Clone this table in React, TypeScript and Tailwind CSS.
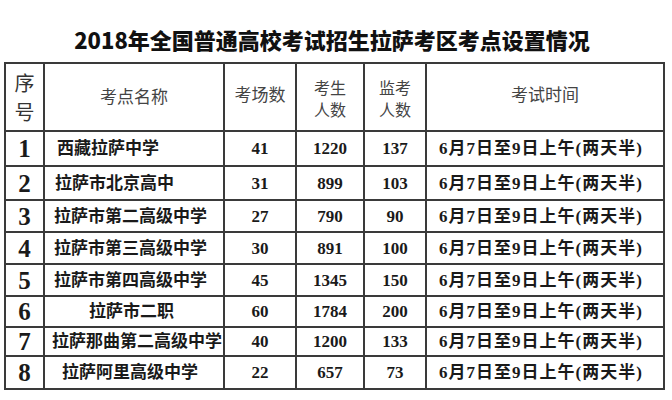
type Row = { no: number; name: string; pad: number; rooms: number; students: number; proctors: number; h: number };

const ROWS: Row[] = [
  { no: 1, name: "西藏拉萨中学", pad: 12, rooms: 41, students: 1220, proctors: 137, h: 35 },
  { no: 2, name: "拉萨市北京高中", pad: 10, rooms: 31, students: 899, proctors: 103, h: 34 },
  { no: 3, name: "拉萨市第二高级中学", pad: 9, rooms: 27, students: 790, proctors: 90, h: 32 },
  { no: 4, name: "拉萨市第三高级中学", pad: 9, rooms: 30, students: 891, proctors: 100, h: 32 },
  { no: 5, name: "拉萨市第四高级中学", pad: 9, rooms: 45, students: 1345, proctors: 150, h: 32 },
  { no: 6, name: "拉萨市二职", pad: 44, rooms: 60, students: 1784, proctors: 200, h: 31 },
  { no: 7, name: "拉萨那曲第二高级中学", pad: 7, rooms: 40, students: 1200, proctors: 133, h: 29 },
  { no: 8, name: "拉萨阿里高级中学", pad: 17, rooms: 22, students: 657, proctors: 73, h: 33 },
];

const serif = "font-['Liberation_Serif','Noto_Sans_CJK_SC',serif]";
const sans = "font-['Noto_Sans_CJK_SC','Noto_Sans',sans-serif]";
const cell = "border-2 border-[#3a3a3a] p-0";

export default function App() {
  return (
    <div className="w-[672px] h-[400px] bg-white overflow-hidden">
      <h1 className={`${sans} pt-[24px] h-[62px] text-center text-[22px] leading-[30px] font-black text-[#111] pr-[8px]`}>
        2018年全国普通高校考试招生拉萨考区考点设置情况
      </h1>

      <table className="ml-[4px] w-[659px] table-fixed border-collapse border-2 border-[#111]">
        <colgroup>
          <col className="w-[39px]" />
          <col className="w-[180px]" />
          <col className="w-[72px]" />
          <col className="w-[68px]" />
          <col className="w-[62px]" />
          <col className="w-[238px]" />
        </colgroup>
        <thead>
          <tr className={`${sans} h-[68px] text-[#444] text-[17px] font-normal`}>
            <th className={`${cell} font-normal text-[20px] leading-[29px] text-[#333]`}>
              <div>序</div>
              <div>号</div>
            </th>
            <th className={`${cell} font-normal pb-[2px]`}>考点名称</th>
            <th className={`${cell} font-normal pb-[6px]`}>考场数</th>
            <th className={`${cell} font-normal text-[16px] leading-[22px] pt-[2px]`}>
              <div>考生</div>
              <div>人数</div>
            </th>
            <th className={`${cell} font-normal text-[16px] leading-[22px] pt-[2px]`}>
              <div>监考</div>
              <div>人数</div>
            </th>
            <th className={`${cell} font-normal pb-[6px]`}>考试时间</th>
          </tr>
        </thead>
        <tbody className={`${serif} font-bold text-[#1a1a1a]`}>
          {ROWS.map((r) => (
            <tr key={r.no} style={{ height: r.h }}>
              <td className={`${cell} text-center text-[25px] leading-none`}>{r.no}</td>
              <td className={`${cell} text-[17px] leading-none text-left whitespace-nowrap`}>
                <span style={{ paddingLeft: r.pad }}>{r.name}</span>
              </td>
              <td className={`${cell} text-center text-[17px] leading-none`}>{r.rooms}</td>
              <td className={`${cell} text-center text-[17px] leading-none`}>{r.students}</td>
              <td className={`${cell} text-center text-[17px] leading-none`}>{r.proctors}</td>
              <td className={`${cell} text-[17px] leading-none tracking-[1px] text-left pl-[12px] whitespace-nowrap`}>
                6月7日至9日上午(两天半)
              </td>
            </tr>
          ))}
        </tbody>
      </table>
    </div>
  );
}
